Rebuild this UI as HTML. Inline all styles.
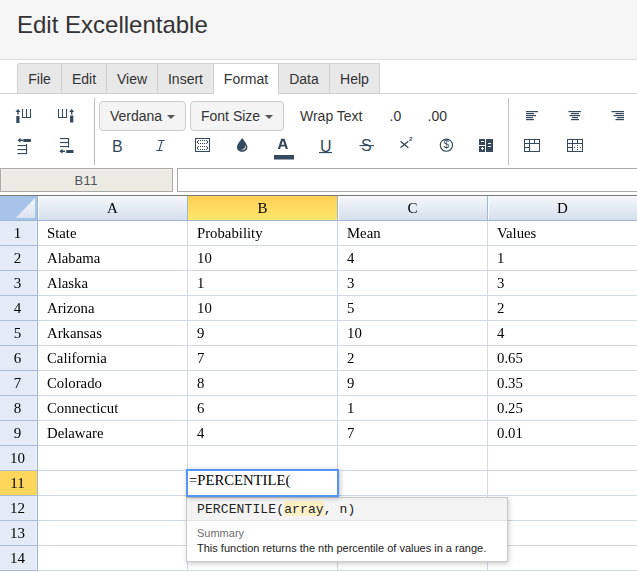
<!DOCTYPE html>
<html><head><meta charset="utf-8"><style>
*{box-sizing:border-box;margin:0;padding:0}
html,body{width:637px;height:572px;overflow:hidden;background:#fff;font-family:"Liberation Sans",sans-serif;color:#333;position:relative}
.abs{position:absolute}
#hdr{position:absolute;left:0;top:0;width:637px;height:60px;background:#f5f5f5;border-bottom:1px solid #dcdcdc}
#hdr h1{position:absolute;left:17px;top:11px;font-size:24px;font-weight:normal;color:#333;white-space:nowrap;line-height:28px}
#tabline{position:absolute;left:0;top:93px;width:637px;height:1px;background:#d0d0d0}
.tab{position:absolute;top:63px;height:30px;background:#e8e8e8;border:1px solid #d0d0d0;border-bottom:none;font-size:14px;line-height:31px;text-align:center;color:#333}
.tab.first{border-top-left-radius:3px}
.tab.act{background:#fff;height:31px}
.sep{position:absolute;top:98px;width:1px;height:67px;background:#bcc1c8}
.btn{position:absolute;top:101px;height:30px;border:1px solid #cccccc;border-radius:4px;background:#f4f4f4;font-size:14px;line-height:29px;padding-left:10px;color:#333;white-space:nowrap}
.caret{display:inline-block;width:0;height:0;border-left:4px solid transparent;border-right:4px solid transparent;border-top:4px solid #555;vertical-align:middle;margin-left:5px;margin-top:-2px;position:relative;top:1px}
.ttxt{position:absolute;top:102px;font-size:14px;line-height:29px;color:#333;white-space:nowrap}
svg.ic{position:absolute;left:0;top:0;overflow:visible}
#nbox{position:absolute;left:0;top:168px;width:173px;height:24px;background:#ebeae3;border:1px solid #a9a9a9;box-shadow:inset 1px 1px 0 #f3f2ec;font-size:13px;line-height:24px;text-align:center;color:#4f5560;letter-spacing:0.5px;text-indent:-0.5px}
#finp{position:absolute;left:177px;top:168px;width:480px;height:24px;border:1px solid #a9a9a9;background:#fff}
#gtop{position:absolute;left:0;top:195px;width:637px;height:1px;background:#777}
.ch{position:absolute;top:196px;height:25px;background:linear-gradient(#fafcfd,#f1f5f9 12%,#d5dfed);border-right:1px solid #9fb6d4;border-bottom:1px solid #9fb6d4;box-shadow:inset 1px 0 0 #f7f9fc;text-align:center;line-height:24px;font-family:"Liberation Serif",serif;font-size:15px;color:#000}
.ch.sel{background:linear-gradient(#ffcf55,#ffe66a);box-shadow:none}
.rh{position:absolute;left:0;width:38px;height:25px;background:#e4ebf6;border-right:1px solid #9fb6d4;border-bottom:1px solid #a9bdd8;box-shadow:inset -1px 0 0 #eef2f9;text-align:center;line-height:24px;font-family:"Liberation Serif",serif;font-size:15px;color:#000;padding-right:2px}
.rh.sel{background:#ffd65c;box-shadow:none}
.cell{position:absolute;height:25px;border-right:1px solid #d3dae7;border-bottom:1px solid #d3dae7;line-height:24px;padding-left:9px;white-space:nowrap;font-family:"Liberation Serif",serif;font-size:14.75px;color:#000}
#editor{position:absolute;left:186px;top:469px;width:153px;height:28px;border:2px solid #5397f6;background:#fff;box-shadow:1px 1px 5px rgba(0,0,0,.25);font-family:"Liberation Serif",serif;font-size:14.7px;color:#000;line-height:19px;padding-left:1px;white-space:nowrap}
#pop{position:absolute;left:186px;top:497px;width:322px;height:65px;border:1px solid #c9c9c9;background:#fff;box-shadow:1px 2px 5px rgba(0,0,0,.2)}
#pop .sig{position:absolute;left:0;top:0;width:320px;height:23px;background:#f3f3f3;border-bottom:1px solid #e3e3e3;font-family:"Liberation Mono",monospace;font-size:13px;line-height:24px;padding-left:10px;color:#222;white-space:nowrap;letter-spacing:0.12px}
#pop .sig b{font-weight:normal;background:linear-gradient(#fdf0c5 0,#fdf0c5 15px,transparent 15px);padding-top:1px}
#pop .sum{position:absolute;left:10px;top:29px;font-size:11px;line-height:13px;color:#6e6e6e}
#pop .desc{position:absolute;left:10px;top:44px;font-size:11px;line-height:13px;color:#222;white-space:nowrap}
</style></head><body>
<div id="hdr"><h1>Edit Excellentable</h1></div>
<div id="tabline"></div>
<div class="tab first" style="left:17px;width:45px">File</div>
<div class="tab" style="left:61px;width:46px">Edit</div>
<div class="tab" style="left:106px;width:52px">View</div>
<div class="tab" style="left:157px;width:57px">Insert</div>
<div class="tab act" style="left:213px;width:66px">Format</div>
<div class="tab" style="left:278px;width:52px">Data</div>
<div class="tab" style="left:329px;width:51px">Help</div>
<div class="sep" style="left:94px"></div>
<div class="sep" style="left:508px"></div>
<div class="btn" style="left:99px;width:87px">Verdana<span class="caret"></span></div>
<div class="btn" style="left:190px;width:94px">Font Size<span class="caret"></span></div>
<div class="ttxt" style="left:300px">Wrap Text</div>
<div class="ttxt" style="left:389.5px">.0</div>
<div class="ttxt" style="left:427.5px">.00</div>
<svg class="ic" width="637" height="572" viewBox="0 0 637 572" fill="none" stroke="none">
<g fill="#34495e">
 <!-- insert col left -->
 <path d="M18 109 L15.5 112 L17.3 112 L17.3 114.5 L18.7 114.5 L18.7 112 L20.5 112 Z"/>
 <rect x="16.3" y="116" width="3.2" height="7"/>
 <path d="M22 109h1v8h3v-8h1v8h3v-8h1v9h-9z"/>
 <!-- insert col right -->
 <path d="M58 109h1v8h3v-8h1v8h3v-8h1v9h-9z"/>
 <path d="M71.7 109 L69.2 112 L71 112 L71 114.5 L72.4 114.5 L72.4 112 L74.2 112 Z"/>
 <rect x="70.1" y="115.5" width="3.2" height="7"/>
 <!-- insert row above -->
 <path d="M17.5 140.3 L20.5 137.8 L20.5 139.6 L23 139.6 L23 141 L20.5 141 L20.5 142.8 Z"/>
 <rect x="23.3" y="139" width="7.6" height="3"/>
 <rect x="17.5" y="145" width="9" height="1.1"/><rect x="17.5" y="149" width="9" height="1.1"/><rect x="17.5" y="153" width="9" height="1.1"/><rect x="26" y="144" width="1.1" height="10.1"/>
 <!-- insert row below -->
 <rect x="60" y="138" width="9" height="1.1"/><rect x="60" y="142" width="9" height="1.1"/><rect x="60" y="146" width="9" height="1.1"/><rect x="68" y="138" width="1.1" height="9.6"/>
 <path d="M59.3 151.3 L62.5 148.8 L62.5 150.6 L65 150.6 L65 152 L62.5 152 L62.5 153.8 Z"/>
 <rect x="66.2" y="150" width="7.3" height="3"/>
 <!-- align left -->
 <rect x="526" y="111" width="12" height="1.2"/>
 <rect x="526" y="113" width="8" height="1.2"/>
 <rect x="526" y="115" width="10" height="1.2"/>
 <rect x="526" y="117" width="7" height="1.2"/>
 <rect x="526" y="119" width="8" height="1.2"/>
 <!-- align center -->
 <rect x="568.5" y="111" width="12.5" height="1.2"/>
 <rect x="571" y="113" width="8" height="1.2"/>
 <rect x="569.5" y="115" width="10.5" height="1.2"/>
 <rect x="572" y="117" width="6" height="1.2"/>
 <rect x="571" y="119" width="8" height="1.2"/>
 <!-- align right -->
 <rect x="611.5" y="111" width="12.5" height="1.2"/>
 <rect x="615.5" y="113" width="8.5" height="1.2"/>
 <rect x="613.5" y="115" width="10.5" height="1.2"/>
 <rect x="617" y="117" width="7" height="1.2"/>
 <rect x="615.5" y="119" width="8.5" height="1.2"/>
 <path fill-rule="evenodd" d="M277.8 149 L281.2 138.8 L284.6 138.8 L288 149 L285.7 149 L284.9 146.6 L280.9 146.6 L280.1 149 Z M281.5 144.8 L284.3 144.8 L283.1 140.9 L282.7 140.9 Z"/>
 <!-- A color bar -->
 <rect x="274" y="155" width="20" height="4.5"/>
 <!-- underline -->
 <rect x="319" y="152" width="13" height="1.1"/>
 <!-- strike -->
 <rect x="359.5" y="145" width="14.5" height="1.1"/>
</g>
<g stroke="#34495e" stroke-width="1.1" fill="none">
 <!-- dollar circle -->
 <circle cx="446.4" cy="145.2" r="6.1" stroke-width="1.1"/>
 <!-- italic I -->
 <path d="M158.2 140.5h6.4 M156.3 150.5h6.2 M161.9 140.8 L159.2 150.2" stroke-width="1.1"/>
 <!-- x superscript -->
 <path d="M400.5 141.3 L408.3 147.8 M408.3 141.3 L400.5 147.8" stroke-width="1.3"/>
</g>
<!-- drop -->
<path fill="#34495e" d="M242.2 138 C239.6 141.8 237 144.4 237 147.3 C237 150.1 239.3 151.8 242.2 151.8 C245.1 151.8 247.4 150.1 247.4 147.3 C247.4 144.4 244.8 141.8 242.2 138 Z"/>
<path fill="#fff" d="M245.9 144.8 C246.6 148.6 244.6 150.6 240.8 150.1 C243.9 149.6 245.6 147.8 245.9 144.8 Z"/>
<!-- calculator -->
<g fill="#34495e" shape-rendering="crispEdges">
 <rect x="479" y="139" width="6" height="6"/>
 <rect x="479" y="146" width="6" height="6"/>
 <rect x="486" y="139" width="7" height="13"/>
 <!-- merge cells -->
 <rect x="195" y="138" width="15" height="1"/><rect x="195" y="151" width="15" height="1"/>
 <rect x="195" y="138" width="1" height="14"/><rect x="209" y="138" width="1" height="14"/>
 <rect x="197" y="141" width="1" height="2"/><rect x="207" y="141" width="1" height="2"/>
 <rect x="197" y="147" width="1" height="2"/><rect x="207" y="147" width="1" height="2"/>
 <rect x="198" y="140" width="1" height="1"/><rect x="200" y="140" width="1" height="1"/><rect x="202" y="140" width="1" height="1"/><rect x="204" y="140" width="1" height="1"/><rect x="206" y="140" width="1" height="1"/><rect x="198" y="143" width="1" height="1"/><rect x="200" y="143" width="1" height="1"/><rect x="202" y="143" width="1" height="1"/><rect x="204" y="143" width="1" height="1"/><rect x="206" y="143" width="1" height="1"/><rect x="198" y="146" width="1" height="1"/><rect x="200" y="146" width="1" height="1"/><rect x="202" y="146" width="1" height="1"/><rect x="204" y="146" width="1" height="1"/><rect x="206" y="146" width="1" height="1"/><rect x="198" y="149" width="1" height="1"/><rect x="200" y="149" width="1" height="1"/><rect x="202" y="149" width="1" height="1"/><rect x="204" y="149" width="1" height="1"/><rect x="206" y="149" width="1" height="1"/>
 <!-- table1 -->
 <rect x="524" y="139" width="16" height="1"/><rect x="524" y="151" width="16" height="1"/>
 <rect x="524" y="139" width="1" height="13"/><rect x="539" y="139" width="1" height="13"/>
 <rect x="524" y="143" width="16" height="1"/><rect x="529" y="139" width="1" height="13"/>
 <rect x="534" y="139" width="1" height="5"/><rect x="524" y="147" width="6" height="1"/>
 <!-- table2 -->
 <rect x="567" y="139" width="16" height="1"/><rect x="567" y="151" width="16" height="1"/>
 <rect x="567" y="139" width="1" height="13"/><rect x="582" y="139" width="1" height="13"/>
 <rect x="567" y="143" width="16" height="1"/><rect x="572" y="139" width="1" height="13"/>
 <rect x="577" y="139" width="1" height="5"/><rect x="567" y="147" width="6" height="1"/>
 <rect x="574" y="147" width="1" height="1"/><rect x="577" y="147" width="1" height="1"/><rect x="580" y="147" width="1" height="1"/>
 <rect x="577" y="145" width="1" height="1"/><rect x="577" y="149" width="1" height="1"/>
</g>
<g fill="#fff" shape-rendering="crispEdges">
 <rect x="481" y="141" width="3" height="1"/>
 <rect x="481" y="148" width="3" height="1"/>
 <rect x="482" y="147" width="1" height="3"/>
 <rect x="488" y="143" width="3" height="1"/>
 <rect x="488" y="146" width="3" height="1"/>
</g>
</svg>
<div class="abs" style="left:112px;top:137px;font-size:16px;line-height:19px;color:#34495e">B</div>
<div class="abs" style="left:320px;top:137px;font-size:16px;line-height:19px;color:#34495e">U</div>
<div class="abs" style="left:361px;top:136px;font-size:16px;line-height:19px;color:#34495e">S</div>
<div class="abs" style="left:409px;top:136px;font-size:6px;font-weight:bold;line-height:7px;color:#34495e">2</div>
<div class="abs" style="left:443.5px;top:139px;font-size:10px;line-height:12px;color:#34495e">$</div>
<div id="nbox">B11</div><div id="finp"></div>
<div id="gtop"></div>
<div style="position:absolute;left:0;top:0;width:637px;height:446px;overflow:hidden;will-change:transform">
<div class="ch" style="left:0;width:38px;background:#a6c3ea;box-shadow:none"><svg width="37" height="24" style="position:absolute;left:0;top:0"><defs><linearGradient id="cg" x1="0" y1="0" x2="0" y2="1"><stop offset="0" stop-color="#f4f7fb"/><stop offset="1" stop-color="#dae3f0"/></linearGradient></defs><path d="M35 2 L35 22 L15.5 22 Z" fill="url(#cg)"/></svg></div>
<div class="ch" style="left:38px;width:150px">A</div>
<div class="ch sel" style="left:188px;width:150px">B</div>
<div class="ch" style="left:338px;width:150px">C</div>
<div class="ch" style="left:488px;width:150px">D</div>
<div class="rh" style="top:221px">1</div>
<div class="cell" style="left:38px;top:221px;width:150px">State</div>
<div class="cell" style="left:188px;top:221px;width:150px">Probability</div>
<div class="cell" style="left:338px;top:221px;width:150px">Mean</div>
<div class="cell" style="left:488px;top:221px;width:150px">Values</div>
<div class="rh" style="top:246px">2</div>
<div class="cell" style="left:38px;top:246px;width:150px">Alabama</div>
<div class="cell" style="left:188px;top:246px;width:150px">10</div>
<div class="cell" style="left:338px;top:246px;width:150px">4</div>
<div class="cell" style="left:488px;top:246px;width:150px">1</div>
<div class="rh" style="top:271px">3</div>
<div class="cell" style="left:38px;top:271px;width:150px">Alaska</div>
<div class="cell" style="left:188px;top:271px;width:150px">1</div>
<div class="cell" style="left:338px;top:271px;width:150px">3</div>
<div class="cell" style="left:488px;top:271px;width:150px">3</div>
<div class="rh" style="top:296px">4</div>
<div class="cell" style="left:38px;top:296px;width:150px">Arizona</div>
<div class="cell" style="left:188px;top:296px;width:150px">10</div>
<div class="cell" style="left:338px;top:296px;width:150px">5</div>
<div class="cell" style="left:488px;top:296px;width:150px">2</div>
<div class="rh" style="top:321px">5</div>
<div class="cell" style="left:38px;top:321px;width:150px">Arkansas</div>
<div class="cell" style="left:188px;top:321px;width:150px">9</div>
<div class="cell" style="left:338px;top:321px;width:150px">10</div>
<div class="cell" style="left:488px;top:321px;width:150px">4</div>
<div class="rh" style="top:346px">6</div>
<div class="cell" style="left:38px;top:346px;width:150px">California</div>
<div class="cell" style="left:188px;top:346px;width:150px">7</div>
<div class="cell" style="left:338px;top:346px;width:150px">2</div>
<div class="cell" style="left:488px;top:346px;width:150px">0.65</div>
<div class="rh" style="top:371px">7</div>
<div class="cell" style="left:38px;top:371px;width:150px">Colorado</div>
<div class="cell" style="left:188px;top:371px;width:150px">8</div>
<div class="cell" style="left:338px;top:371px;width:150px">9</div>
<div class="cell" style="left:488px;top:371px;width:150px">0.35</div>
<div class="rh" style="top:396px">8</div>
<div class="cell" style="left:38px;top:396px;width:150px">Connecticut</div>
<div class="cell" style="left:188px;top:396px;width:150px">6</div>
<div class="cell" style="left:338px;top:396px;width:150px">1</div>
<div class="cell" style="left:488px;top:396px;width:150px">0.25</div>
<div class="rh" style="top:421px">9</div>
<div class="cell" style="left:38px;top:421px;width:150px">Delaware</div>
<div class="cell" style="left:188px;top:421px;width:150px">4</div>
<div class="cell" style="left:338px;top:421px;width:150px">7</div>
<div class="cell" style="left:488px;top:421px;width:150px">0.01</div>
</div>
<div class="cell" style="left:38px;top:446px;width:150px"></div>
<div class="cell" style="left:188px;top:446px;width:150px"></div>
<div class="cell" style="left:338px;top:446px;width:150px"></div>
<div class="cell" style="left:488px;top:446px;width:150px"></div>
<div class="cell" style="left:38px;top:471px;width:150px"></div>
<div class="cell" style="left:188px;top:471px;width:150px"></div>
<div class="cell" style="left:338px;top:471px;width:150px"></div>
<div class="cell" style="left:488px;top:471px;width:150px"></div>
<div class="cell" style="left:38px;top:496px;width:150px"></div>
<div class="cell" style="left:188px;top:496px;width:150px"></div>
<div class="cell" style="left:338px;top:496px;width:150px"></div>
<div class="cell" style="left:488px;top:496px;width:150px"></div>
<div class="cell" style="left:38px;top:521px;width:150px"></div>
<div class="cell" style="left:188px;top:521px;width:150px"></div>
<div class="cell" style="left:338px;top:521px;width:150px"></div>
<div class="cell" style="left:488px;top:521px;width:150px"></div>
<div class="cell" style="left:38px;top:546px;width:150px"></div>
<div class="cell" style="left:188px;top:546px;width:150px"></div>
<div class="cell" style="left:338px;top:546px;width:150px"></div>
<div class="cell" style="left:488px;top:546px;width:150px"></div>
<div style="position:absolute;left:0;top:446px;width:38px;height:126px;overflow:hidden;will-change:transform">
<div class="rh" style="top:0px">10</div>
<div class="rh sel" style="top:25px">11</div>
<div class="rh" style="top:50px">12</div>
<div class="rh" style="top:75px">13</div>
<div class="rh" style="top:100px">14</div>
</div>
<div id="editor" style="z-index:2">=PERCENTILE(</div>
<div id="pop" style="z-index:1"><div class="sig">PERCENTILE(<b>array</b>, n)</div><div class="sum">Summary</div><div class="desc">This function returns the nth percentile of values in a range.</div></div>
</body></html>
